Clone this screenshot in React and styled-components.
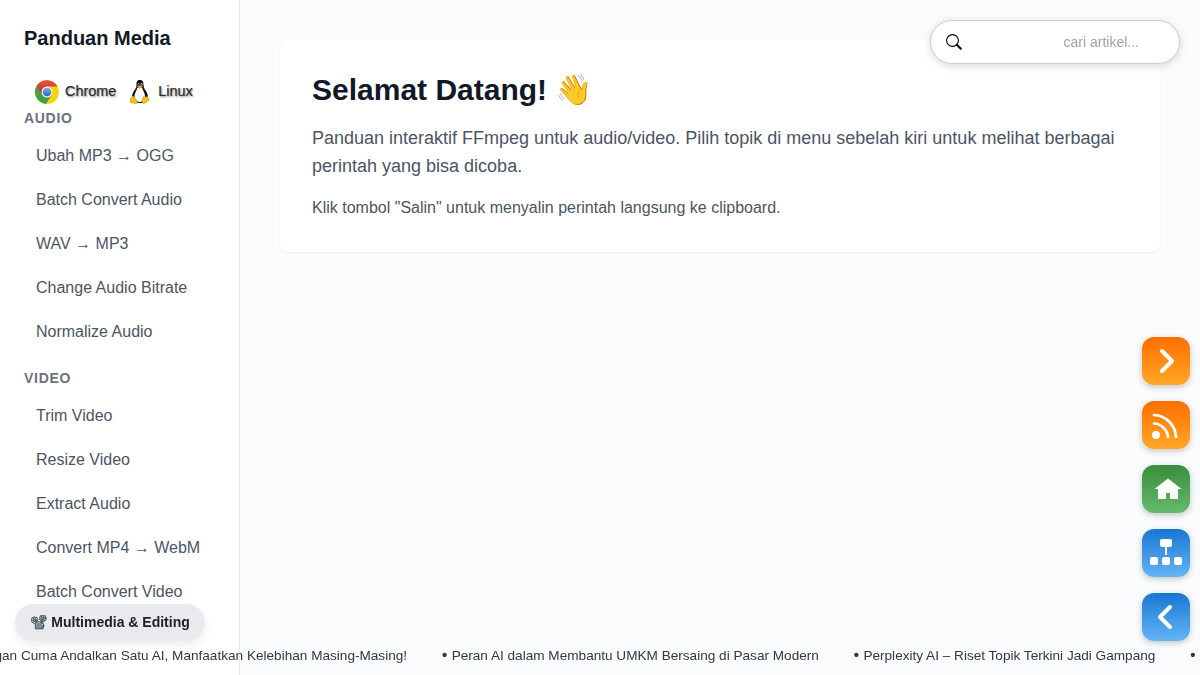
import React from 'react';
import styled, { createGlobalStyle } from 'styled-components';

const GlobalStyle = createGlobalStyle`
  *, *::before, *::after { box-sizing: border-box; }
  body {
    margin: 0;
    background: #fafbfd;
    color: #4b5563;
    font-family: "Liberation Sans", Arial, "Noto Color Emoji", sans-serif;
    font-size: 16px;
    line-height: 24px;
    overflow: hidden;
  }
  h1, h2, h3, p, ul { margin: 0; padding: 0; }
  ul { list-style: none; }
`;

const Page = styled.div`
  display: flex;
  height: 100vh;
  overflow: hidden;
`;

const Sidebar = styled.aside`
  width: 240px;
  flex: none;
  padding: 24px 23px 0 24px;
  background: #fff;
  border-right: 1px solid #e5e7eb;
  overflow: hidden;
`;

const Brand = styled.h2`
  font-size: 20px;
  line-height: 28px;
  color: #111827;
`;

const Platforms = styled.div`
  display: flex;
  align-items: center;
  height: 24px;
  margin: 28px 0 4px 11px;
`;

const Platform = styled.span`
  display: flex;
  align-items: center;
  gap: ${(p) => p.$gap}px;
  margin-right: 14px;
  font-size: 14.4px;
  line-height: 20px;
  color: #2b2b2b;
  -webkit-text-stroke: 0.15px #2b2b2b;
  text-shadow: 1px 1px 2px rgba(0, 0, 0, 0.5);

  svg { flex: none; }
`;

const PlatformName = styled.span`
  padding-bottom: 2px;
`;

const Section = styled.section`
  margin-bottom: 14px;
`;

const SectionLabel = styled.h3`
  margin-bottom: 6px;
  font-size: 14px;
  line-height: 20px;
  letter-spacing: 0.7px;
  text-transform: uppercase;
  color: #6b7280;
`;

const TopicLink = styled.li`
  height: 44px;
  padding: 10px 12px;
  white-space: nowrap;
  color: #4b5563;
`;

const Main = styled.main`
  flex: 1;
  padding: 40px;
`;

const Card = styled.article`
  padding: 32px;
  height: 212px;
  background: #fff;
  border-radius: 8px;
  box-shadow: 0 1px 2px rgba(0, 0, 0, 0.06);
`;

const Heading = styled.h1`
  margin-bottom: 16px;
  font-size: 30px;
  line-height: 36px;
  color: #111827;
`;

const Lead = styled.p`
  margin-bottom: 16px;
  font-size: 18px;
  line-height: 28px;
`;

const SearchBox = styled.label`
  position: fixed;
  top: 20px;
  right: 20px;
  display: flex;
  align-items: center;
  justify-content: space-between;
  width: 250px;
  height: 44px;
  padding: 0 40px 0 15px;
  background: #fff;
  border: 1px solid #ccc;
  border-radius: 22px;
  box-shadow: 0 2px 8px rgba(0, 0, 0, 0.15);
`;

const SearchInput = styled.input`
  width: 160px;
  padding: 0;
  border: 0;
  outline: 0;
  background: none;
  font: 14px "Liberation Sans", Arial, sans-serif;
  text-align: right;

  &::placeholder { color: #9ca3af; }
`;

const Dock = styled.nav`
  position: fixed;
  right: 10px;
  bottom: 34px;
  display: flex;
  flex-direction: column;
  gap: 16px;
`;

const tones = {
  orange: ['#ff6f00', '#ffa726'],
  green: ['#388e3c', '#66bb6a'],
  blue: ['#1976d2', '#64b5f6'],
};

const DockButton = styled.button`
  display: block;
  width: 48px;
  height: 48px;
  padding: 0;
  border: 0;
  border-radius: 12px;
  background: linear-gradient(${(p) => tones[p.$tone].join(', ')});
  box-shadow: 0 2px 6px rgba(0, 0, 0, 0.22);

  svg { display: block; }
`;

const CategoryPill = styled.div`
  position: fixed;
  left: 15px;
  bottom: 34px;
  width: 190px;
  height: 37px;
  padding: 8px 0 0 15px;
  border-radius: 19px;
  background: #e9eaed;
  box-shadow: 0 4px 10px rgba(0, 0, 0, 0.08);
  font-size: 14px;
  line-height: 20px;
  font-weight: 700;
  white-space: nowrap;
  color: #222;
`;

const Ticker = styled.div`
  position: fixed;
  left: 0;
  right: 0;
  bottom: 9px;
  overflow: hidden;
`;

const TickerTrack = styled.div`
  display: flex;
  gap: 35px;
  margin-left: -37px;
  font-size: 13.6px;
  line-height: 20px;
  white-space: nowrap;
  color: #333842;
`;

const TickerItem = styled.span`
  flex: none;

  &::before {
    content: '•';
    margin-right: 4.3px;
    font-weight: 700;
    font-size: 15px;
    line-height: 1;
  }
`;

const ChromeLogo = () => (
  <svg width="24" height="24" viewBox="0 0 48 48">
    <defs>
      <linearGradient id="cr" x2="0" y2="1"><stop stopColor="#e8524a" /><stop offset="1" stopColor="#c4231b" /></linearGradient>
      <linearGradient id="cb" x2="0" y2="1"><stop stopColor="#7fb2e5" /><stop offset="1" stopColor="#2a66ad" /></linearGradient>
    </defs>
    <circle cx="24" cy="24" r="24" fill="#fcd20a" />
    <path d="M24 24 14.5 29.5 3.2 12A24 24 0 0 0 22 47.9L33.500 29.500Z" fill="#42a146" />
    <path d="M24 13H44.800A24 24 0 0 0 3.200 12L14.500 29.500Z" fill="url(#cr)" />
    <circle cx="24" cy="24" r="11" fill="#f4f4f4" />
    <circle cx="24" cy="24" r="8.700" fill="url(#cb)" />
  </svg>
);

const LinuxLogo = () => (
  <svg width="20" height="24" viewBox="2 0 40 48" preserveAspectRatio="none">
    <path d="M22 0c-6 0-7.500 4-7 10 .3 5-2 7-4.500 11-2.500 4-4.500 8-4.500 13 0 7 8 12 16 12s16-4 16-11c0-6-2.500-11-5-14.500-3-4-3.700-6-4-11C28.700 4 27.500 0 22 0Z" fill="#111" />
    <path d="M17 15c-1 5-5 9-6 16-.7 7 4 13 10 13s11-5 11-11c0-8-5-13-6-18-3 2-6 2-9 0Z" fill="#fff" />
    <ellipse cx="19" cy="8.500" rx="1.600" ry="2.200" fill="#ddd" />
    <ellipse cx="25" cy="8.500" rx="1.900" ry="2.400" fill="#ddd" />
    <circle cx="19.500" cy="9" r="1" fill="#111" />
    <circle cx="24.500" cy="9" r="1" fill="#111" />
    <path d="M16.500 13c2-3 7-3 11 0-2 3-7 5-11 0Z" fill="#eeb211" />
    <path d="M7 32c2-1 4 2 6 5 2 3 5 6 3 9-3 3-8-1-13-1-2-1-1-4-1-6 0-4 4-3 5-7Z" fill="#f4bd16" stroke="#9b7211" strokeWidth=".7" />
    <path d="M29 33c2 2 6 1 7-1 2 1 1 4 4 6 3 3-2 4-5 6-4 4-8 4-9 0-.6-4 2-7 3-11Z" fill="#f4bd16" stroke="#9b7211" strokeWidth=".7" />
  </svg>
);

const SearchIcon = () => (
  <svg width="16" height="16" viewBox="0 0 16 16" fill="none" stroke="#000">
    <circle cx="6.500" cy="6.500" r="5.900" strokeWidth="1.100" />
    <path d="m10.800 10.800 4 4" strokeWidth="2" strokeLinecap="round" />
  </svg>
);

const ChevronIcon = ({ d }) => (
  <svg width="48" height="48" viewBox="0 0 48 48" fill="none" stroke="#fff" strokeWidth="4" strokeLinecap="round" strokeLinejoin="round">
    <path d={d} />
  </svg>
);

const FeedIcon = () => (
  <svg width="48" height="48" viewBox="0 0 48 48" fill="none" stroke="#fff" strokeWidth="2.7">
    <circle cx="14" cy="34" r="4" fill="#fff" stroke="none" />
    <path d="M12 14C24 14.500 33.500 24 34 36M12 22.500C19 22.500 25.500 29 26 36" strokeLinecap="round" />
  </svg>
);

const HomeIcon = () => (
  <svg width="48" height="48" viewBox="0 0 48 48" fill="#fff">
    <path d="M26 13.500 39.500 24H36V34H28V28H24V34H16V24H12.500Z" />
  </svg>
);

const SitemapIcon = () => (
  <svg width="48" height="48" viewBox="0 0 48 48" fill="#fff">
    <rect x="18" y="10" width="12" height="8" rx="2" />
    <path d="M23 17h2v9h-2z" />
    <rect x="8" y="28" width="8" height="8" rx="2" />
    <rect x="20" y="28" width="8" height="8" rx="2" />
    <rect x="32" y="28" width="8" height="8" rx="2" />
  </svg>
);

const sections = [
  { label: 'Audio', topics: ['Ubah MP3 → OGG', 'Batch Convert Audio', 'WAV → MP3', 'Change Audio Bitrate', 'Normalize Audio'] },
  { label: 'Video', topics: ['Trim Video', 'Resize Video', 'Extract Audio', 'Convert MP4 → WebM', 'Batch Convert Video'] },
];

const headlines = [
  'Jangan Cuma Andalkan Satu AI, Manfaatkan Kelebihan Masing-Masing!',
  'Peran AI dalam Membantu UMKM Bersaing di Pasar Modern',
  'Perplexity AI – Riset Topik Terkini Jadi Gampang',
  'AI',
];

const dock = [
  { name: 'Berikutnya', tone: 'orange', icon: <ChevronIcon d="m20 14 10 10-10 10" /> },
  { name: 'RSS', tone: 'orange', icon: <FeedIcon /> },
  { name: 'Beranda', tone: 'green', icon: <HomeIcon /> },
  { name: 'Peta situs', tone: 'blue', icon: <SitemapIcon /> },
  { name: 'Kembali', tone: 'blue', icon: <ChevronIcon d="m28 14-10 10 10 10" /> },
];

export default function App() {
  return (
    <>
      <GlobalStyle />
      <Page>
        <Sidebar>
          <Brand>Panduan Media</Brand>
          <Platforms>
            <Platform $gap={6}><ChromeLogo /><PlatformName>Chrome</PlatformName></Platform>
            <Platform $gap={8}><LinuxLogo /><PlatformName>Linux</PlatformName></Platform>
          </Platforms>
          {sections.map((s) => (
            <Section key={s.label}>
              <SectionLabel>{s.label}</SectionLabel>
              <ul>{s.topics.map((t) => <TopicLink key={t}>{t}</TopicLink>)}</ul>
            </Section>
          ))}
        </Sidebar>
        <Main>
          <Card>
            <Heading>Selamat Datang! 👋</Heading>
            <Lead>
              Panduan interaktif FFmpeg untuk audio/video. Pilih topik di menu sebelah kiri untuk melihat berbagai perintah yang bisa dicoba.
            </Lead>
            <p>Klik tombol "Salin" untuk menyalin perintah langsung ke clipboard.</p>
          </Card>
        </Main>
      </Page>
      <SearchBox>
        <SearchIcon />
        <SearchInput placeholder="cari artikel..." />
      </SearchBox>
      <CategoryPill>📽️ Multimedia &amp; Editing</CategoryPill>
      <Ticker>
        <TickerTrack>
          {headlines.map((h) => <TickerItem key={h}>{h}</TickerItem>)}
        </TickerTrack>
      </Ticker>
      <Dock>
        {dock.map((b) => <DockButton key={b.name} $tone={b.tone}>{b.icon}</DockButton>)}
      </Dock>
    </>
  );
}
